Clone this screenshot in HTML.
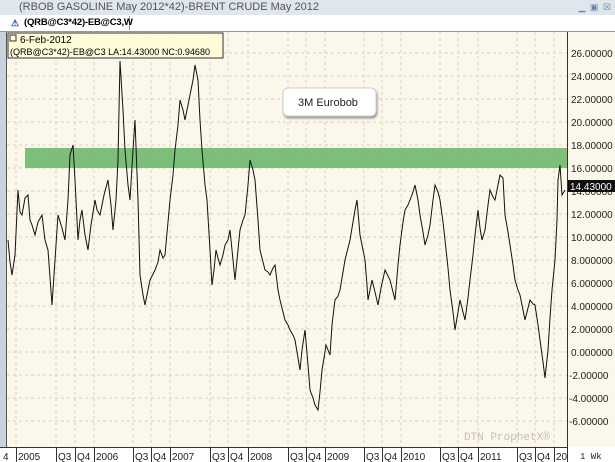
<!DOCTYPE html><html><head><style>
body{margin:0;width:615px;height:462px;overflow:hidden;background:#fff;font-family:"Liberation Sans",sans-serif;position:relative}
.t{position:absolute;left:0;top:0;width:615px;height:15px;background:#dfe6ee;color:#555;font-size:11px;line-height:15px;padding-left:19px;box-sizing:border-box}
.tab{position:absolute;left:0;top:15px;width:615px;height:16px;background:#fff;border-bottom:1px solid #999}
</style></head><body>
<div class="t">(RBOB GASOLINE May 2012*42)-BRENT CRUDE May 2012</div>
<div style="position:absolute;right:3px;top:2px;font-size:9px;color:#6a85a8;letter-spacing:1px">▁ ▣ ☒</div>
<div class="tab"><div style="position:absolute;left:8px;top:1px;width:122px;height:14px;border-right:1px solid #999;font-size:9.5px;font-weight:bold;line-height:14px;padding-left:16px;box-sizing:border-box;white-space:nowrap;letter-spacing:-0.2px"><span style="position:absolute;left:3px;color:#2a54a8;font-size:9px">⚠</span>(QRB@C3*42)-EB@C3,W</div></div>
<svg style="position:absolute;left:0;top:32px" width="615" height="430" font-family="Liberation Sans" font-size="9.5">
<rect x="0" y="0" width="615" height="430" fill="#fbf7ea"/>
<rect x="0" y="0" width="6" height="430" fill="#c9d3de"/>
<line x1="6.5" y1="0" x2="6.5" y2="415" stroke="#555"/>
<g stroke="#d8d2c0" stroke-dasharray="3,3">
<line x1="7" x2="567" y1="21" y2="21"/><line x1="7" x2="567" y1="44" y2="44"/><line x1="7" x2="567" y1="67" y2="67"/><line x1="7" x2="567" y1="90" y2="90"/><line x1="7" x2="567" y1="113" y2="113"/><line x1="7" x2="567" y1="136" y2="136"/><line x1="7" x2="567" y1="159" y2="159"/><line x1="7" x2="567" y1="182" y2="182"/><line x1="7" x2="567" y1="205" y2="205"/><line x1="7" x2="567" y1="228" y2="228"/><line x1="7" x2="567" y1="251" y2="251"/><line x1="7" x2="567" y1="274" y2="274"/><line x1="7" x2="567" y1="297" y2="297"/><line x1="7" x2="567" y1="320" y2="320"/><line x1="7" x2="567" y1="343" y2="343"/><line x1="7" x2="567" y1="366" y2="366"/><line x1="7" x2="567" y1="389" y2="389"/>
<line x1="16" x2="16" y1="0" y2="415"/><line x1="56" x2="56" y1="0" y2="415"/><line x1="75" x2="75" y1="0" y2="415"/><line x1="94" x2="94" y1="0" y2="415"/><line x1="133" x2="133" y1="0" y2="415"/><line x1="151" x2="151" y1="0" y2="415"/><line x1="170" x2="170" y1="0" y2="415"/><line x1="210" x2="210" y1="0" y2="415"/><line x1="228" x2="228" y1="0" y2="415"/><line x1="248" x2="248" y1="0" y2="415"/><line x1="288" x2="288" y1="0" y2="415"/><line x1="306" x2="306" y1="0" y2="415"/><line x1="325" x2="325" y1="0" y2="415"/><line x1="364" x2="364" y1="0" y2="415"/><line x1="382" x2="382" y1="0" y2="415"/><line x1="401" x2="401" y1="0" y2="415"/><line x1="440" x2="440" y1="0" y2="415"/><line x1="458" x2="458" y1="0" y2="415"/><line x1="478" x2="478" y1="0" y2="415"/><line x1="517" x2="517" y1="0" y2="415"/><line x1="535" x2="535" y1="0" y2="415"/><line x1="554" x2="554" y1="0" y2="415"/>
</g>
<rect x="25" y="116" width="542" height="20" fill="#6db86d" opacity="0.9"/>
<polyline fill="none" stroke="#111" stroke-width="1" transform="translate(0,-32)" points="8,240 10,262 12,275 15,255 18,190 20,212 22,215 25,198 28,195 30,220 32,225 35,235 38,222 42,215 45,240 48,250 52,305 55,260 58,215 62,228 65,240 68,200 70,155 73,145 75,180 78,240 80,220 82,210 85,235 88,250 91,225 95,200 97,210 100,215 104,195 108,180 111,205 113,230 116,200 118,160 120,61 123,110 125,150 128,185 130,200 133,150 135,120 138,200 140,275 143,295 145,305 148,290 150,280 155,270 158,262 160,250 163,258 165,255 170,200 173,175 175,150 178,125 180,100 183,110 185,120 188,105 190,95 193,80 195,65 198,80 200,120 202,150 205,185 207,200 210,250 212,285 214,270 216,250 218,258 220,265 223,255 225,245 228,240 230,230 233,260 235,280 238,250 240,230 243,220 245,215 248,185 250,160 253,170 255,180 258,220 260,250 263,262 265,270 268,272 270,275 273,268 275,265 278,290 280,300 285,320 288,325 290,330 293,335 295,340 298,358 300,370 302,350 305,330 308,365 310,390 313,398 315,405 318,410 320,392 322,370 324,358 326,345 328,350 330,355 332,325 335,300 338,296 340,290 343,272 345,260 348,248 350,240 353,222 355,210 357,200 360,235 363,250 365,260 367,285 368,300 370,290 372,280 375,292 378,305 381,288 385,270 388,276 390,280 393,292 395,300 398,265 400,245 403,222 405,210 408,205 410,200 413,192 415,185 418,200 420,215 423,232 425,245 428,235 430,225 433,200 435,185 438,192 440,200 443,222 445,240 448,268 450,290 453,312 455,330 458,312 460,300 463,312 465,320 468,298 470,280 473,255 475,235 478,210 480,228 482,240 485,230 488,205 490,190 493,197 495,200 498,185 500,175 503,178 505,215 508,232 510,245 513,265 515,280 518,290 520,295 523,310 525,320 528,308 530,300 533,304 535,305 538,325 540,340 543,362 545,378 548,350 550,318 552,290 555,260 557,220 558,180 560,165 562,195 565,190"/>
<rect x="283" y="56" width="93" height="28" rx="5" fill="#fff" stroke="#ccc" style="filter:drop-shadow(1px 2px 1px #999)"/>
<text x="298" y="74" font-size="11" fill="#222">3M Eurobob</text>
<rect x="8" y="1" width="215" height="25" fill="#fdfbd8" stroke="#333"/>
<rect x="10" y="3" width="6" height="6" fill="none" stroke="#333"/>
<text x="20" y="11" font-size="10">6-Feb-2012</text>
<text x="10" y="23" font-size="9.6" textLength="200" lengthAdjust="spacingAndGlyphs">(QRB@C3*42)-EB@C3 LA:14.43000 NC:0.94680</text>
<line x1="567.5" y1="0" x2="567.5" y2="415" stroke="#333"/>
<g font-size="10" fill="#222">
<text x="571" y="25">26.00000</text><text x="571" y="48">24.00000</text><text x="571" y="71">22.00000</text><text x="571" y="94">20.00000</text><text x="571" y="117">18.00000</text><text x="571" y="140">16.00000</text><text x="571" y="163">14.00000</text><text x="571" y="186">12.00000</text><text x="571" y="209">10.00000</text><text x="571" y="232">8.000000</text><text x="571" y="255">6.000000</text><text x="571" y="278">4.000000</text><text x="571" y="301">2.000000</text><text x="571" y="324">0.000000</text><text x="569" y="347">-2.00000</text><text x="569" y="370">-4.00000</text><text x="569" y="393">-6.00000</text>
</g>
<rect x="568" y="148" width="47" height="12" fill="#111"/><text x="570" y="158" font-size="10" fill="#fff">14.43000</text>
<text x="464" y="408" font-family="Liberation Mono" font-size="11" fill="#c8c0b0">DTN ProphetX®</text>
<rect x="0" y="415" width="615" height="15" fill="#fff"/>
<line x1="0" x2="567" y1="415.5" y2="415.5" stroke="#333"/>
<line x1="567.5" x2="567.5" y1="415" y2="430" stroke="#333"/>
<g font-size="10" fill="#222"><text x="3" y="428">4</text><text x="18" y="428">2005</text><text x="58" y="428">Q3</text><text x="77" y="428">Q4</text><text x="96" y="428">2006</text><text x="135" y="428">Q3</text><text x="153" y="428">Q4</text><text x="172" y="428">2007</text><text x="212" y="428">Q3</text><text x="230" y="428">Q4</text><text x="250" y="428">2008</text><text x="290" y="428">Q3</text><text x="308" y="428">Q4</text><text x="327" y="428">2009</text><text x="366" y="428">Q3</text><text x="384" y="428">Q4</text><text x="403" y="428">2010</text><text x="442" y="428">Q3</text><text x="460" y="428">Q4</text><text x="480" y="428">2011</text><text x="519" y="428">Q3</text><text x="537" y="428">Q4</text><text x="556" y="428">20</text><text x="580" y="427" font-family="Liberation Mono" font-size="9">1 Wk</text></g>
<g stroke="#333"><line x1="16.5" x2="16.5" y1="415" y2="430"/><line x1="56.5" x2="56.5" y1="415" y2="430"/><line x1="75.5" x2="75.5" y1="415" y2="430"/><line x1="94.5" x2="94.5" y1="415" y2="430"/><line x1="133.5" x2="133.5" y1="415" y2="430"/><line x1="151.5" x2="151.5" y1="415" y2="430"/><line x1="170.5" x2="170.5" y1="415" y2="430"/><line x1="210.5" x2="210.5" y1="415" y2="430"/><line x1="228.5" x2="228.5" y1="415" y2="430"/><line x1="248.5" x2="248.5" y1="415" y2="430"/><line x1="288.5" x2="288.5" y1="415" y2="430"/><line x1="306.5" x2="306.5" y1="415" y2="430"/><line x1="325.5" x2="325.5" y1="415" y2="430"/><line x1="364.5" x2="364.5" y1="415" y2="430"/><line x1="382.5" x2="382.5" y1="415" y2="430"/><line x1="401.5" x2="401.5" y1="415" y2="430"/><line x1="440.5" x2="440.5" y1="415" y2="430"/><line x1="458.5" x2="458.5" y1="415" y2="430"/><line x1="478.5" x2="478.5" y1="415" y2="430"/><line x1="517.5" x2="517.5" y1="415" y2="430"/><line x1="535.5" x2="535.5" y1="415" y2="430"/><line x1="554.5" x2="554.5" y1="415" y2="430"/></g>
</svg>
</body></html>
